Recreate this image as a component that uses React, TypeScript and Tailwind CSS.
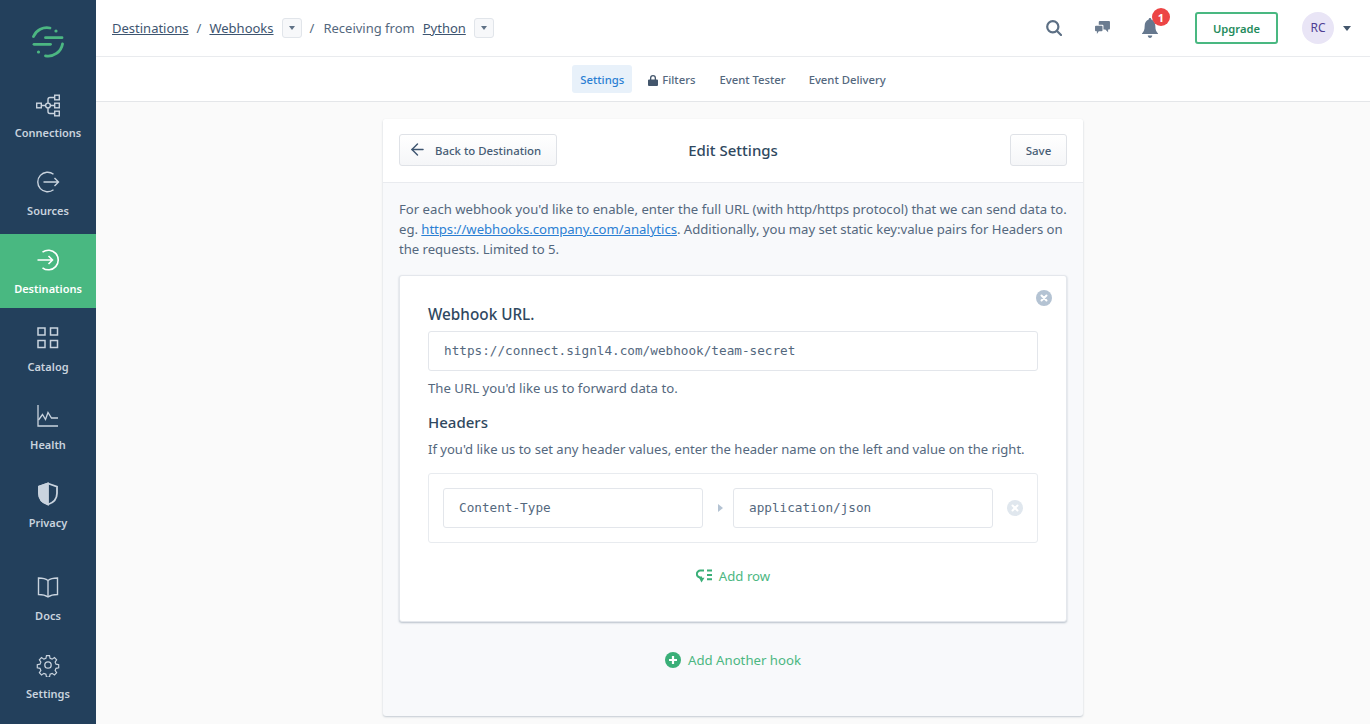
import type { ReactNode } from 'react'
import { ArrowLeft } from 'lucide-react'

function Logo() {
  return (
    <svg width="32" height="32" viewBox="0 0 32 32" fill="none" stroke="#4cb782" strokeWidth="2.800" strokeLinecap="round">
      <path d="M1.500 10.500A14.500 14.500 0 0 1 18 2" />
      <path d="M30.500 18A14.500 14.500 0 0 1 13.500 29.800" />
      <path d="M13.500 11.700H30" />
      <path d="M2 18.300H18.500" />
      <circle cx="24" cy="5" r="1.600" fill="#4cb782" stroke="none" />
      <circle cx="6.500" cy="26" r="1.600" fill="#4cb782" stroke="none" />
    </svg>
  )
}

const iconProps = {
  width: 24,
  height: 24,
  viewBox: '0 0 24 24',
  fill: 'none',
  stroke: 'currentColor',
  strokeWidth: 1.400,
}

const ConnectionsIcon = () => (
  <svg {...iconProps} viewBox="0 -1.500 24 24" overflow="visible">
    <rect x="0.700" y="9.700" width="4.600" height="4.600" />
    <circle cx="12" cy="12" r="2.400" />
    <rect x="18.700" y="1.700" width="4.600" height="4.600" />
    <rect x="18.700" y="9.700" width="4.600" height="4.600" />
    <rect x="18.700" y="17.700" width="4.600" height="4.600" />
    <path d="M5.300 12h4.300M14.400 12h4.300M12 9.600V6q0-2 2-2h4.700M12 14.400V18q0 2 2 2h4.700" />
  </svg>
)
const SourcesIcon = () => (
  <svg {...iconProps}>
    <path d="M17.500 4.200A9.800 9.800 0 1 0 17.500 19.800" />
    <path d="M7.500 12h15M18.500 8l4 4-4 4" />
  </svg>
)
const DestinationsIcon = () => (
  <svg {...iconProps} strokeWidth={1.600}>
    <path d="M6.500 4.200A9.800 9.800 0 1 1 6.500 19.800" />
    <path d="M1.500 12h15M12.500 8l4 4-4 4" />
  </svg>
)
const CatalogIcon = () => (
  <svg {...iconProps} strokeWidth={1.500}>
    <rect x="2" y="2" width="7" height="7" />
    <rect x="14.500" y="2" width="7" height="7" />
    <rect x="2" y="14.500" width="7" height="7" />
    <rect x="14.500" y="14.500" width="7" height="7" />
  </svg>
)
const HealthIcon = () => (
  <svg {...iconProps} strokeWidth={1.300}>
    <path d="M2 1v21h20" />
    <path d="M2.500 16l4-5.500 3 5 2.500-7 3.500 5.500H22" />
  </svg>
)
const PrivacyIcon = () => (
  <svg {...iconProps} strokeWidth={1.800}>
    <path d="M12 1.500l9 3.200v6.500c0 5.200-3.600 9.400-9 11.300-5.400-1.900-9-6.100-9-11.300V4.700z" />
    <path d="M12 1.500v21c-5.400-1.900-9-6.100-9-11.300V4.700z" fill="currentColor" />
  </svg>
)
const DocsIcon = () => (
  <svg {...iconProps}>
    <path d="M12 5.500C9.500 3.500 6 3 2.500 3v16.500c3.500 0 7 .7 9.500 2.500 2.500-1.800 6-2.500 9.500-2.500V3C18 3 14.500 3.500 12 5.500z" />
    <path d="M12 5.500V22" />
  </svg>
)
const SettingsIcon = () => (
  <svg {...iconProps} strokeWidth={1.300}>
    <circle cx="12" cy="12" r="3.200" />
    <path d="M10.300 1.500h3.400l.6 3 2.300 1 2.600-1.700 2.400 2.400-1.700 2.600 1 2.300 3 .6v3.400l-3 .6-1 2.300 1.700 2.600-2.400 2.400-2.600-1.700-2.300 1-.6 3h-3.400l-.6-3-2.300-1-2.600 1.700-2.400-2.400 1.700-2.600-1-2.300-3-.6v-3.400l3-.6 1-2.300-1.700-2.600 2.400-2.400 2.600 1.700 2.300-1z" transform="translate(1.200 1.200) scale(.9)" />
  </svg>
)

function NavItem({ label, icon, active }: { label: string; icon: ReactNode; active?: boolean }) {
  return (
    <div
      className={
        'flex h-[74px] flex-col items-center pt-[14px] text-[11px] font-semibold ' +
        (active ? 'bg-[#49b881] text-white' : 'text-[#c9d3de]')
      }
    >
      <div className="h-6 w-6">{icon}</div>
      <div className="mt-[9px] leading-4">{label}</div>
    </div>
  )
}

function Sidebar() {
  return (
    <aside className="flex h-[724px] w-[96px] shrink-0 flex-col bg-[#23405c]">
      <div className="flex h-[78px] shrink-0 items-start justify-center pt-[26px]">
        <Logo />
      </div>
      <div className="flex flex-col gap-1">
        <NavItem label="Connections" icon={<ConnectionsIcon />} />
        <NavItem label="Sources" icon={<SourcesIcon />} />
        <NavItem label="Destinations" icon={<DestinationsIcon />} active />
        <NavItem label="Catalog" icon={<CatalogIcon />} />
        <NavItem label="Health" icon={<HealthIcon />} />
        <NavItem label="Privacy" icon={<PrivacyIcon />} />
        <div className="h-[11px]" />
        <NavItem label="Docs" icon={<DocsIcon />} />
        <NavItem label="Settings" icon={<SettingsIcon />} />
      </div>
    </aside>
  )
}

function Caret() {
  return (
    <span className="flex h-5 w-5 items-center justify-center rounded-[3px] border border-[#e1e5ea] bg-[#f7f8fa]">
      <span className="h-0 w-0 border-x-[3.500px] border-t-[4px] border-x-transparent border-t-[#5f7186]" />
    </span>
  )
}

function TopBar() {
  return (
    <header className="flex h-[57px] shrink-0 items-center border-b border-[#e9ebee] bg-white pl-4 pr-[19px] text-[13px] text-[#54687e]">
      <a className="pt-[2px] text-[#3e5570] underline">Destinations</a>
      <span className="ml-2 pt-[2px]">/</span>
      <a className="ml-2 pt-[2px] text-[#3e5570] underline">Webhooks</a>
      <span className="ml-2"><Caret /></span>
      <span className="ml-2 pt-[2px]">/</span>
      <span className="ml-[9px] pt-[2px]">Receiving from</span>
      <a className="ml-2 pt-[2px] text-[#3e5570] underline">Python</a>
      <span className="ml-2"><Caret /></span>
      <div className="ml-auto flex items-center">
        <svg width="16" height="16" viewBox="0 0 16 16" fill="none" stroke="#5c6f84" strokeWidth="2.200">
          <circle cx="6.800" cy="6.800" r="5.600" />
          <path d="M11 11l4 4" strokeLinecap="round" />
        </svg>
        <svg width="15" height="14" viewBox="0 0 16 15" fill="#6b7c90" className="ml-[33px]">
          <path d="M5 0h10a1 1 0 0 1 1 1v7a1 1 0 0 1-1 1h-1v3l-3-3H9V5a1 1 0 0 0-1-1H4V1a1 1 0 0 1 1-1z" />
          <path d="M1 5h6a1 1 0 0 1 1 1v4a1 1 0 0 1-1 1H4l-2 3v-3H1a1 1 0 0 1-1-1V6a1 1 0 0 1 1-1z" />
        </svg>
        <div className="relative ml-8 h-5 w-4">
          <svg width="16" height="20" viewBox="0 0 18 20" fill="#66788e" preserveAspectRatio="none">
            <path d="M9 0c1 0 1.500.7 1.500 1.500C13.500 2.200 15 5 15 8c0 4 1 5.500 3 7.500V16H0v-.5C2 13.500 3 12 3 8c0-3 1.500-5.800 4.500-6.500C7.500.7 8 0 9 0z" />
            <path d="M6.500 17.500h5C11.500 19 10.300 20 9 20s-2.500-1-2.500-2.500z" />
          </svg>
          <span className="absolute -top-[10px] left-[10px] flex h-[18px] w-[18px] items-center justify-center rounded-full bg-[#ec4545] text-[11px] font-bold leading-none text-white">
            1
          </span>
        </div>
        <button className="ml-[37px] flex h-8 w-[83px] items-center justify-center rounded-[3px] border-2 border-[#49b881] pt-[2px] text-[11.200px] font-semibold text-[#1f8b5c]">
          Upgrade
        </button>
        <div className="ml-6 flex h-8 w-8 items-center justify-center rounded-full bg-[#e9e5f6] text-xs text-[#4f3f93]">
          RC
        </div>
        <span className="ml-[9px] h-0 w-0 border-x-4 border-t-[5px] border-x-transparent border-t-[#43566c]" />
      </div>
    </header>
  )
}

function Tabs() {
  return (
    <nav className="flex h-[45px] shrink-0 items-center justify-center border-b border-[#e4e6e9] bg-white pr-2 text-[11.300px] font-medium text-[#54687e]">
      <span className="flex h-7 w-[60px] items-center justify-center rounded-[3px] bg-[#e8f1fa] pt-[2px] text-[#2b7fd3]">Settings</span>
      <span className="ml-4 flex items-center gap-1 pt-[2px]">
        <svg width="10" height="11" viewBox="0 0 10 11" fill="#43566c">
          <path d="M2 4.500V3a3 3 0 0 1 6 0v1.500h1a1 1 0 0 1 1 1V10a1 1 0 0 1-1 1H1a1 1 0 0 1-1-1V5.500a1 1 0 0 1 1-1zm1.300 0h3.400V3a1.700 1.700 0 0 0-3.400 0z" />
        </svg>
        Filters
      </span>
      <span className="ml-6 pt-[2px]">Event Tester</span>
      <span className="ml-[23px] pt-[2px]">Event Delivery</span>
    </nav>
  )
}

function ClearIcon({ color, size = 16 }: { color: string; size?: number }) {
  return (
    <svg width={size} height={size} viewBox="0 0 16 16">
      <circle cx="8" cy="8" r="8" fill={color} />
      <path d="M5.500 5.500l5 5M10.500 5.500l-5 5" stroke="#fff" strokeWidth="2" strokeLinecap="round" />
    </svg>
  )
}

function MonoInput({ value, className }: { value: string; className: string }) {
  return (
    <div className={'flex h-10 items-center rounded-[3px] border border-[#e3e6eb] bg-white pl-[15px] font-["DejaVu_Sans_Mono",monospace] text-[12.700px] text-[#54687e] ' + className}>
      {value}
    </div>
  )
}

function HookCard() {
  return (
    <div className="relative mt-4 h-[347px] rounded-[3px] border border-[#e4e7ec] bg-white px-7 pt-[27px] shadow-[0_1px_2px_rgba(67,90,111,0.35)]">
      <span className="absolute right-[14px] top-[14px]">
        <ClearIcon color="#b4c3d3" />
      </span>
      <h3 className="text-[15.300px] font-medium leading-[22px] text-[#2f4860]">Webhook URL.</h3>
      <MonoInput value="https://connect.signl4.com/webhook/team-secret" className="mt-[6px] w-[610px]" />
      <p className="mt-[7px] text-[13.200px] leading-5 text-[#54687e]">The URL you'd like us to forward data to.</p>
      <h3 className="mt-[13px] text-[15px] font-medium leading-[22px] text-[#2f4860]">Headers</h3>
      <p className="mt-[6px] text-[13.050px] leading-5 text-[#54687e]">
        If you'd like us to set any header values, enter the header name on the left and value on the right.
      </p>
      <div className="mt-[14px] flex h-[70px] w-[610px] items-center rounded-[3px] border border-[#e8ebef] pl-[14px]">
        <MonoInput value="Content-Type" className="w-[260px]" />
        <span className="ml-[15px] h-0 w-0 border-y-[4px] border-l-[5px] border-y-transparent border-l-[#b4c3d3]" />
        <MonoInput value="application/json" className="ml-[10px] w-[260px]" />
        <span className="ml-[14px]">
          <ClearIcon color="#e0e7ee" />
        </span>
      </div>
      <div className="mt-[23px] flex w-[610px] items-center justify-center gap-[7px] text-[13.200px] leading-5 text-[#4cb782]">
        <svg width="16" height="14" viewBox="0 0 16 14" fill="none" stroke="#3aaf78" strokeWidth="2">
          <path d="M8 1.600H4.500A3.400 3.400 0 0 0 4 8.400H6" />
          <path d="M3 8.800h5.500l-3 4.700z" fill="#3aaf78" stroke="none" />
          <path d="M11 1.600h5M11 6h5M11 10.300h5" />
        </svg>
        Add row
      </div>
    </div>
  )
}

export default function App() {
  return (
    <div className="flex h-[724px] w-[1370px] overflow-hidden bg-[#fafafa] font-['Noto_Sans',sans-serif]">
      <Sidebar />
      <main className="flex min-w-0 flex-1 flex-col">
        <TopBar />
        <Tabs />
        <div className="flex flex-1 justify-center pt-[17px]">
          <section className="h-[597px] w-[700px] rounded-[3px] bg-[#f8f9fb] shadow-[0_1px_2px_rgba(67,90,111,0.3)]">
            <div className="flex h-[64px] items-center rounded-t-[3px] border-b border-[#e9ebef] bg-white px-4 pb-[2px]">
              <button className="flex h-8 w-[158px] shrink-0 items-center rounded-[3px] border border-[#dfe2e7] bg-gradient-to-b from-white to-[#f5f6f8] pl-2 text-[11.400px] font-medium text-[#465c74]">
                <ArrowLeft size={19} strokeWidth={1.800} className="text-[#3e5570]" />
                <span className="ml-2 pt-[2px]">Back to Destination</span>
              </button>
              <h2 className="flex-1 pr-[101px] pt-[2px] text-center text-[15px] font-medium text-[#2f4860]">Edit Settings</h2>
              <button className="flex h-8 w-[57px] shrink-0 items-center justify-center rounded-[3px] border border-[#dfe2e7] bg-gradient-to-b from-white to-[#f5f6f8] pt-[2px] text-[11.500px] font-medium text-[#465c74]">
                Save
              </button>
            </div>
            <div className="px-4 pt-[16px]">
              <p className="text-[13.150px] leading-5 text-[#54687e]">
                For each webhook you'd like to enable, enter the full URL (with http/https protocol) that we can send data to.
                <br />
                <span className="tracking-[-0.033px]">
                  eg. <a className="text-[#2b7fd3] underline">https://webhooks.company.com/analytics</a>. Additionally, you may set static key:value pairs for Headers on
                  <br />
                  the requests. Limited to 5.
                </span>
              </p>
              <HookCard />
              <div className="mt-[28px] flex items-center justify-center gap-[7px] text-[13.200px] leading-5 text-[#4cb782]">
                <svg width="16" height="16" viewBox="0 0 16 16">
                  <circle cx="8" cy="8" r="8" fill="#3aaf78" />
                  <path d="M8 4v8M4 8h8" stroke="#fff" strokeWidth="2.200" />
                </svg>
                Add Another hook
              </div>
            </div>
          </section>
        </div>
      </main>
    </div>
  )
}
